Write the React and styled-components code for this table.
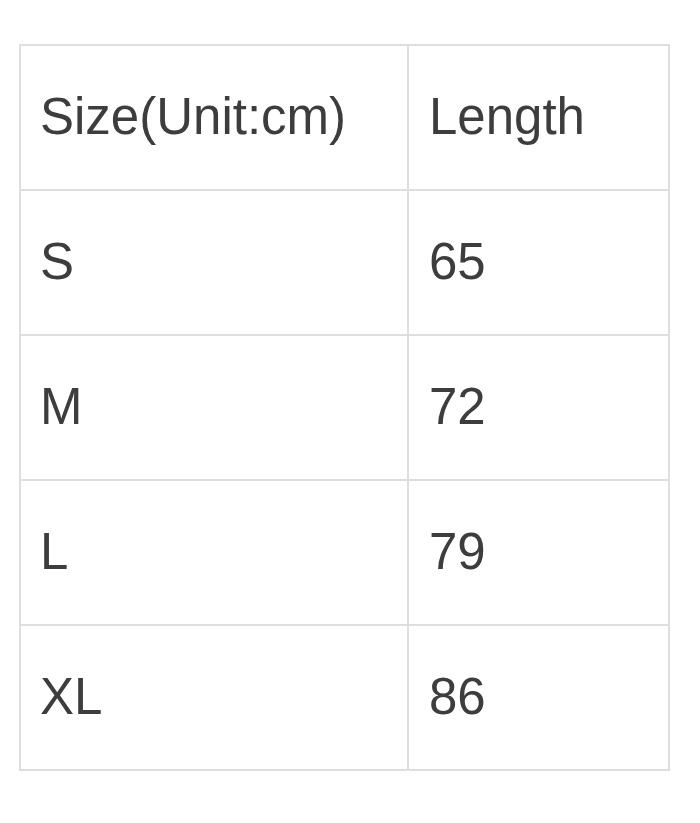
import React from "react";
import styled, { createGlobalStyle } from "styled-components";

const Global = createGlobalStyle`
  html, body { margin: 0; padding: 0; background: #fff; }
  body { font-family: "Liberation Sans", Arial, sans-serif; }
`;

const Page = styled.div`
  padding: 44px 0 0 19px;
`;

const Grid = styled.div`
  display: grid;
  grid-template-columns: 386px 259px;
  grid-auto-rows: 143px;
  gap: 2px;
  padding: 2px;
  width: max-content;
  background: #dedede;
`;

const Cell = styled.div`
  background: #fff;
  display: flex;
  align-items: center;
  padding: 0 0 2px ${(p) => (p.$first ? "19px" : "20px")};
  font-family: "Liberation Sans", Arial, sans-serif;
  font-size: 51px;
  color: #3d3d3d;
  white-space: nowrap;
`;

const rows = [
  ["Size(Unit:cm)", "Length"],
  ["S", "65"],
  ["M", "72"],
  ["L", "79"],
  ["XL", "86"],
];

export default function App() {
  return (
    <>
      <Global />
      <Page>
        <Grid>
          {rows.map(([a, b]) => (
            <React.Fragment key={a}>
              <Cell $first>{a}</Cell>
              <Cell>{b}</Cell>
            </React.Fragment>
          ))}
        </Grid>
      </Page>
    </>
  );
}
